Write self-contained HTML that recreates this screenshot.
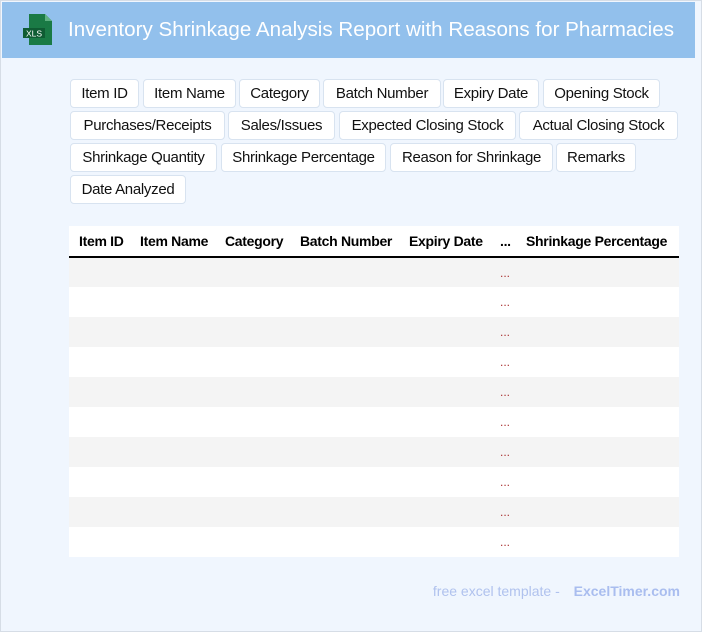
<!DOCTYPE html>
<html><head><meta charset="utf-8"><style>
*{margin:0;padding:0;box-sizing:border-box}
body{width:702px;height:632px;background:#f0f6fe;font-family:"Liberation Sans",sans-serif;position:relative;overflow:hidden;border:1px solid #d6dde6}
.hdr{position:absolute;left:1px;top:1px;width:693px;height:56px;background:#92c0ec}
.tag{position:absolute;height:29px;background:#fff;border:1px solid #d8e3f0;border-radius:4px;font-size:15px;color:#111;text-align:center;line-height:27px;white-space:nowrap;letter-spacing:-0.3px}
table{position:absolute;left:68px;top:225px;width:610px;border-collapse:collapse;font-size:14px}
th{height:31px;font-weight:bold;text-align:left;border-bottom:2px solid #000;background:#fff;padding:0 0 0 8px;white-space:nowrap;letter-spacing:-0.3px}
td{height:30px;padding:0}
tr:nth-child(even) td{background:#f4f4f4}
tr:nth-child(odd) td{background:#fff}
td.d{font-size:12px;color:#a33;padding-left:6px;vertical-align:middle}
.ft{position:absolute;top:582px;right:21px;font-size:14px;color:#b0c2ee}
.ft b{color:#a9bdef;margin-left:10px}
</style></head><body>
<div class="hdr">
<svg width="693" height="56" style="position:absolute;left:0;top:0">
<path d="M27 12 H43 L50 19 V43 H27 Z" fill="#1a7a45"/>
<path d="M43 12 V19 H50 Z" fill="#5fb282"/>
<rect x="21" y="26" width="22" height="10" fill="#0f5c33"/>
<text x="32" y="34.5" font-size="8.5" fill="#fff" text-anchor="middle" font-family="Liberation Sans">XLS</text>
<text x="66" y="34" font-size="20" fill="#fff" textLength="606" lengthAdjust="spacingAndGlyphs" font-family="Liberation Sans">Inventory Shrinkage Analysis Report with Reasons for Pharmacies</text>
</svg></div>

<div class="tag" style="left:69px;top:78px;width:69px">Item ID</div>
<div class="tag" style="left:142px;top:78px;width:93px">Item Name</div>
<div class="tag" style="left:238px;top:78px;width:81px">Category</div>
<div class="tag" style="left:322px;top:78px;width:118px">Batch Number</div>
<div class="tag" style="left:442px;top:78px;width:96px">Expiry Date</div>
<div class="tag" style="left:542px;top:78px;width:117px">Opening Stock</div>
<div class="tag" style="left:69px;top:110px;width:155px">Purchases/Receipts</div>
<div class="tag" style="left:227px;top:110px;width:107px">Sales/Issues</div>
<div class="tag" style="left:338px;top:110px;width:177px">Expected Closing Stock</div>
<div class="tag" style="left:518px;top:110px;width:159px">Actual Closing Stock</div>
<div class="tag" style="left:69px;top:142px;width:147px">Shrinkage Quantity</div>
<div class="tag" style="left:220px;top:142px;width:165px">Shrinkage Percentage</div>
<div class="tag" style="left:389px;top:142px;width:163px">Reason for Shrinkage</div>
<div class="tag" style="left:555px;top:142px;width:80px">Remarks</div>
<div class="tag" style="left:69px;top:174px;width:116px">Date Analyzed</div>

<table>
<tr><th style="width:63px;padding-left:10px">Item ID</th><th style="width:85px">Item Name</th><th style="width:75px">Category</th><th style="width:109px">Batch Number</th><th style="width:93px">Expiry Date</th><th style="width:24px;padding-left:6px">...</th><th>Shrinkage Percentage</th></tr>
<tr><td></td><td></td><td></td><td></td><td></td><td class="d">...</td><td></td></tr>
<tr><td></td><td></td><td></td><td></td><td></td><td class="d">...</td><td></td></tr>
<tr><td></td><td></td><td></td><td></td><td></td><td class="d">...</td><td></td></tr>
<tr><td></td><td></td><td></td><td></td><td></td><td class="d">...</td><td></td></tr>
<tr><td></td><td></td><td></td><td></td><td></td><td class="d">...</td><td></td></tr>
<tr><td></td><td></td><td></td><td></td><td></td><td class="d">...</td><td></td></tr>
<tr><td></td><td></td><td></td><td></td><td></td><td class="d">...</td><td></td></tr>
<tr><td></td><td></td><td></td><td></td><td></td><td class="d">...</td><td></td></tr>
<tr><td></td><td></td><td></td><td></td><td></td><td class="d">...</td><td></td></tr>
<tr><td></td><td></td><td></td><td></td><td></td><td class="d">...</td><td></td></tr>
</table>

<div class="ft">free excel template - <b>ExcelTimer.com</b></div>
</body></html>
